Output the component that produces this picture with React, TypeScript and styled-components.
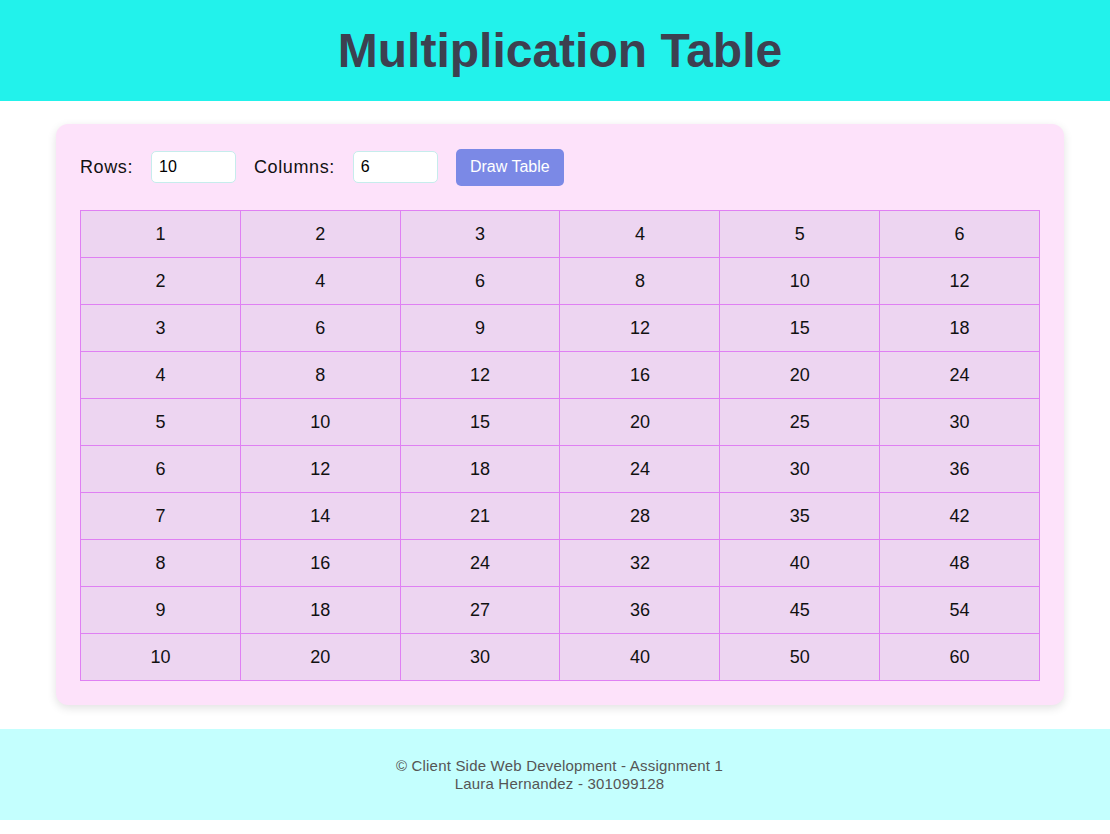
import React, { useState } from "react";
import styled, { createGlobalStyle } from "styled-components";

const Global = createGlobalStyle`
  html, body { margin: 0; padding: 0; background: #ffffff; }
  body { font-family: "Liberation Sans", Arial, sans-serif; }
  * { box-sizing: border-box; }
`;

const Header = styled.header`
  height: 101px;
  background: #22f2eb;
  display: flex;
  align-items: center;
  justify-content: center;
  padding-left: 10px;
`;

const Title = styled.h1`
  margin: 0;
  font-size: 48px;
  font-weight: 700;
  color: #3d4050;
  line-height: 1;
`;

const Main = styled.main`
  padding: 23px 46px 24px 56px;
`;

const Card = styled.section`
  width: 1008px;
  background: #fde2fa;
  border-radius: 12px;
  box-shadow: 0 3px 10px rgba(0, 0, 0, 0.12);
  padding: 25px 24px 24px;
`;

const Controls = styled.div`
  display: flex;
  align-items: center;
  height: 36px;
  margin-bottom: 25px;
`;

const Label = styled.label`
  font-size: 18px;
  letter-spacing: 0.6px;
  color: #111;
  margin-right: 18px;
`;

const NumInput = styled.input`
  width: 85px;
  height: 32px;
  border: 1px solid #c6ecec;
  border-radius: 5px;
  background: #fff;
  font-family: "Liberation Sans", Arial, sans-serif;
  font-size: 16px;
  padding: 0 7px;
  margin-right: 18px;
  outline: none;
  color: #000;
`;

const Button = styled.button`
  width: 108px;
  height: 37px;
  border: none;
  border-radius: 5px;
  background: #7b89e6;
  color: #fff;
  font-family: "Liberation Sans", Arial, sans-serif;
  font-size: 16px;
  cursor: pointer;
`;

const Table = styled.table`
  width: 960px;
  border-collapse: collapse;
  table-layout: fixed;
`;

const Cell = styled.td`
  height: 47px;
  border: 1px solid #df80f3;
  background: #edd5f1;
  text-align: center;
  font-size: 18px;
  color: #111;
  padding: 0;
`;

const Footer = styled.footer`
  height: 91px;
  background: #c4fffe;
  display: flex;
  flex-direction: column;
  align-items: center;
  justify-content: center;
  font-size: 15px;
  letter-spacing: 0.2px;
  line-height: 18px;
  color: #555;
  padding: 0 0 0 9px;
`;

export default function App() {
  const [rows, setRows] = useState("10");
  const [cols, setCols] = useState("6");
  const r = 10;
  const c = 6;
  return (
    <>
      <Global />
      <Header>
        <Title>Multiplication Table</Title>
      </Header>
      <Main>
        <Card>
          <Controls>
            <Label>Rows:</Label>
            <NumInput type="text" value={rows} onChange={(e) => setRows(e.target.value)} />
            <Label>Columns:</Label>
            <NumInput type="text" value={cols} onChange={(e) => setCols(e.target.value)} />
            <Button>Draw Table</Button>
          </Controls>
          <Table>
            <tbody>
              {Array.from({ length: r }, (_, i) => (
                <tr key={i}>
                  {Array.from({ length: c }, (_, j) => (
                    <Cell key={j}>{(i + 1) * (j + 1)}</Cell>
                  ))}
                </tr>
              ))}
            </tbody>
          </Table>
        </Card>
      </Main>
      <Footer>
        <div>© Client Side Web Development - Assignment 1</div>
        <div>Laura Hernandez - 301099128</div>
      </Footer>
    </>
  );
}
